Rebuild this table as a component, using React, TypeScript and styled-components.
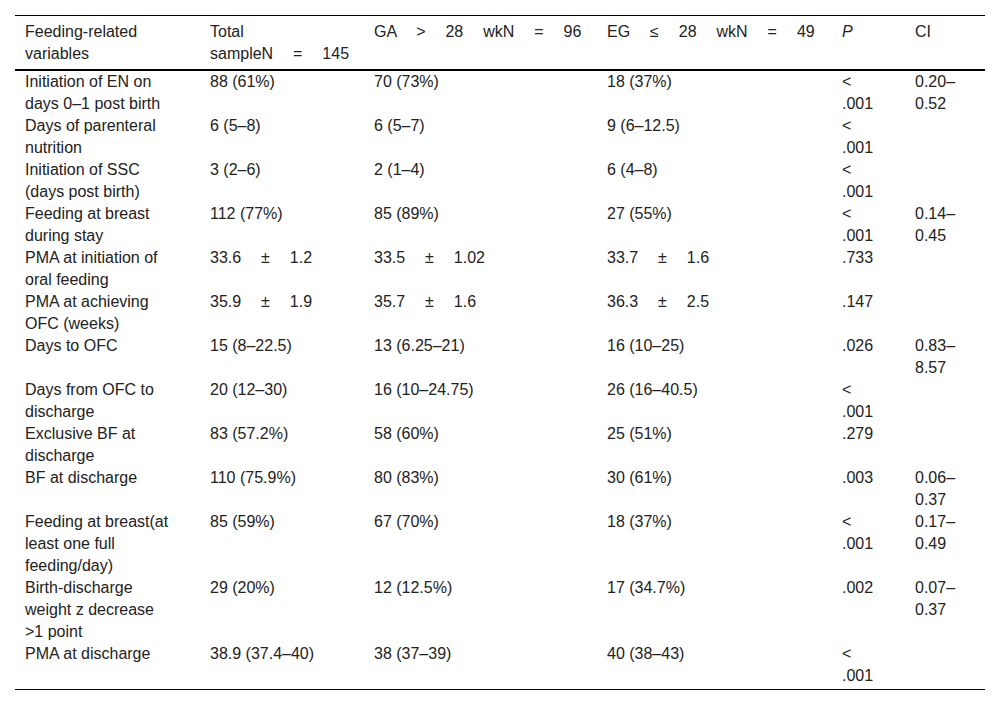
import React from "react";
import styled, { createGlobalStyle } from "styled-components";

const GlobalStyle = createGlobalStyle`
  body {
    margin: 0;
    background: #fff;
    font-family: "Liberation Sans", Arial, sans-serif;
    color: #222;
  }
`;

const Page = styled.div`
  padding: 15px;
`;

const Table = styled.table`
  width: 970px;
  table-layout: fixed;
  border-collapse: collapse;
  border-top: 1px solid #000;
  border-bottom: 1px solid #000;
  font-size: 16px;
  line-height: 22px;
`;

const HeadRow = styled.tr`
  border-bottom: 2px solid #000;
`;

const HeadCell = styled.th<{ $italic?: boolean }>`
  text-align: left;
  vertical-align: top;
  font-weight: normal;
  font-style: ${p => (p.$italic ? "italic" : "normal")};
  padding: 5px 28px 4px 10px;
`;

const BodyRow = styled.tr`
  &:last-child td {
    padding-bottom: 2px;
  }
`;

const Cell = styled.td`
  text-align: left;
  vertical-align: top;
  padding: 0 28px 0 10px;
`;

// the source puts wide spaces around relational signs and ±
const Spaced = styled.span`
  word-spacing: 15.5px;
  white-space: nowrap;
`;

type Row = {
  label: string;
  total: string;
  ga: string;
  eg: string;
  p: string;
  ci?: string;
};

const rows: Row[] = [
  { label: "Initiation of EN on days 0–1 post birth", total: "88 (61%)", ga: "70 (73%)", eg: "18 (37%)", p: "< .001", ci: "0.20–0.52" },
  { label: "Days of parenteral nutrition", total: "6 (5–8)", ga: "6 (5–7)", eg: "9 (6–12.5)", p: "< .001" },
  { label: "Initiation of SSC (days post birth)", total: "3 (2–6)", ga: "2 (1–4)", eg: "6 (4–8)", p: "< .001" },
  { label: "Feeding at breast during stay", total: "112 (77%)", ga: "85 (89%)", eg: "27 (55%)", p: "< .001", ci: "0.14–0.45" },
  { label: "PMA at initiation of oral feeding", total: "33.6 ± 1.2", ga: "33.5 ± 1.02", eg: "33.7 ± 1.6", p: ".733" },
  { label: "PMA at achieving OFC (weeks)", total: "35.9 ± 1.9", ga: "35.7 ± 1.6", eg: "36.3 ± 2.5", p: ".147" },
  { label: "Days to OFC", total: "15 (8–22.5)", ga: "13 (6.25–21)", eg: "16 (10–25)", p: ".026", ci: "0.83–8.57" },
  { label: "Days from OFC to discharge", total: "20 (12–30)", ga: "16 (10–24.75)", eg: "26 (16–40.5)", p: "< .001" },
  { label: "Exclusive BF at discharge", total: "83 (57.2%)", ga: "58 (60%)", eg: "25 (51%)", p: ".279" },
  { label: "BF at discharge", total: "110 (75.9%)", ga: "80 (83%)", eg: "30 (61%)", p: ".003", ci: "0.06–0.37" },
  { label: "Feeding at breast(at least one full feeding/day)", total: "85 (59%)", ga: "67 (70%)", eg: "18 (37%)", p: "< .001", ci: "0.17–0.49" },
  { label: "Birth-discharge weight z decrease >1 point", total: "29 (20%)", ga: "12 (12.5%)", eg: "17 (34.7%)", p: ".002", ci: "0.07–0.37" },
  { label: "PMA at discharge", total: "38.9 (37.4–40)", ga: "38 (37–39)", eg: "40 (38–43)", p: "< .001" },
];

const Value: React.FC<{ text: string }> = ({ text }) =>
  text.includes("±") ? <Spaced>{text}</Spaced> : <>{text}</>;

const App: React.FC = () => {
  return (
    <Page>
      <GlobalStyle />
      <Table>
        <colgroup>
          <col style={{ width: 185 }} />
          <col style={{ width: 164 }} />
          <col style={{ width: 233 }} />
          <col style={{ width: 235 }} />
          <col style={{ width: 73 }} />
          <col style={{ width: 80 }} />
        </colgroup>
        <thead>
          <HeadRow>
            <HeadCell>Feeding-related variables</HeadCell>
            <HeadCell>
              Total <Spaced>sampleN = 145</Spaced>
            </HeadCell>
            <HeadCell>
              <Spaced>GA &gt; 28 wkN = 96</Spaced>
            </HeadCell>
            <HeadCell>
              <Spaced>EG ≤ 28 wkN = 49</Spaced>
            </HeadCell>
            <HeadCell $italic>P</HeadCell>
            <HeadCell>CI</HeadCell>
          </HeadRow>
        </thead>
        <tbody>
          {rows.map(row => (
            <BodyRow key={row.label}>
              <Cell>{row.label}</Cell>
              <Cell><Value text={row.total} /></Cell>
              <Cell><Value text={row.ga} /></Cell>
              <Cell><Value text={row.eg} /></Cell>
              <Cell>{row.p}</Cell>
              <Cell>{row.ci}</Cell>
            </BodyRow>
          ))}
        </tbody>
      </Table>
    </Page>
  );
};

export default App;
